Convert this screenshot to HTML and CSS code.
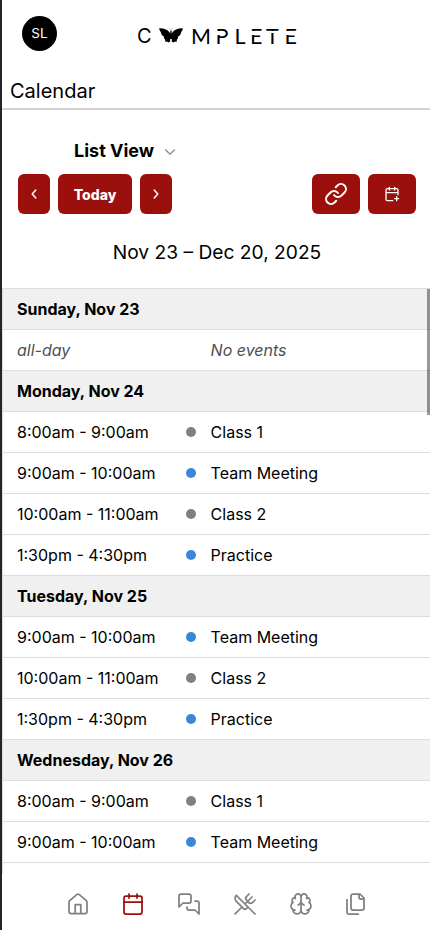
FILE: index.html
```html
<!DOCTYPE html>
<html lang="en">
<head>
<meta charset="utf-8">
<title>Calendar</title>
<link rel="stylesheet" href="styles.css">
</head>
<body>
<div class="app">
<header class="top">
  <div class="avatar">SL</div>
  <div class="logo">
    <span class="c">C</span>
    <svg class="butterfly" viewBox="0 0 24 17" width="24" height="17"><path d="M0 1.500Q4 .8 8 3Q10.500 4.500 11.300 6.500L11.300 4L12 3.500L12.700 4L12.700 6.500Q13.500 4.500 16 3Q20 .8 24 1.500Q23.300 3.500 22.300 5Q22 8 19 9.800Q19.500 11.500 18 12.500L17.500 15L16 14.500L14.500 15.500L12.800 14.500V12H11.200V14.500L9.500 15.500L8 14.500L6.500 15L6 12.500Q4.500 11.500 5 9.800Q2 8 1.700 5Q.7 3.500 0 1.500Z"/><path d="M11.500 3.500 10.500 1M12.500 3.500 13.500 1" stroke="#999" stroke-width=".5"/></svg>
    <span class="m">M</span><span class="p">P</span><span class="l">L</span><span class="e">E</span><span class="t">T</span><span class="e last">E</span>
  </div>
</header>
<h1 class="title">Calendar</h1>
<div class="view">List View<svg width="12" height="12" viewBox="0 0 12 12"><path d="M1.500 3.800 6 8.200 10.500 3.800"/></svg></div>
<div class="toolbar">
  <button class="btn arrow" aria-label="Previous"><svg width="16" height="16" viewBox="0 0 16 16"><path d="M9.800 4 6.200 8l3.600 4"/></svg></button>
  <button class="btn today">Today</button>
  <button class="btn arrow" aria-label="Next"><svg width="16" height="16" viewBox="0 0 16 16"><path d="M6.200 4 9.800 8l-3.600 4"/></svg></button>
  <button class="btn wide link" aria-label="Link"><svg width="24" height="24" viewBox="0 0 24 24"><path d="M10 13a5 5 0 0 0 7.540.54l3-3a5 5 0 0 0-7.070-7.070l-1.720 1.710"/><path d="M14 11a5 5 0 0 0-7.540-.54l-3 3a5 5 0 0 0 7.070 7.070l1.710-1.710"/></svg></button>
  <button class="btn wide" aria-label="Add event"><svg width="16" height="16" viewBox="0 0 24 24"><path d="M8 2v4M16 2v4M21 13V6a2 2 0 0 0-2-2H5a2 2 0 0 0-2 2v14a2 2 0 0 0 2 2h8M3 10h18M16 19h6M19 16v6"/></svg></button>
</div>
<h2 class="range">Nov 23 – Dec 20, 2025</h2>
<main class="list">
  <div class="day">Sunday, Nov 23</div>
  <div class="row none"><span>all-day</span><i></i><span>No events</span></div>
  <div class="day">Monday, Nov 24</div>
  <div class="row"><span>8:00am - 9:00am</span><i class="dot"></i><span>Class 1</span></div>
  <div class="row"><span>9:00am - 10:00am</span><i class="dot blue"></i><span>Team Meeting</span></div>
  <div class="row"><span>10:00am - 11:00am</span><i class="dot"></i><span>Class 2</span></div>
  <div class="row"><span>1:30pm - 4:30pm</span><i class="dot blue"></i><span>Practice</span></div>
  <div class="day">Tuesday, Nov 25</div>
  <div class="row"><span>9:00am - 10:00am</span><i class="dot blue"></i><span>Team Meeting</span></div>
  <div class="row"><span>10:00am - 11:00am</span><i class="dot"></i><span>Class 2</span></div>
  <div class="row"><span>1:30pm - 4:30pm</span><i class="dot blue"></i><span>Practice</span></div>
  <div class="day">Wednesday, Nov 26</div>
  <div class="row"><span>8:00am - 9:00am</span><i class="dot"></i><span>Class 1</span></div>
  <div class="row"><span>9:00am - 10:00am</span><i class="dot blue"></i><span>Team Meeting</span></div>
  <div class="thumb"></div>
</main>
<nav class="nav">
  <svg viewBox="0 0 24 24"><path d="M3 10.200a2 2 0 0 1 .7-1.500l7-6a2 2 0 0 1 2.600 0l7 6a2 2 0 0 1 .7 1.500V19.500a2 2 0 0 1-2 2H5a2 2 0 0 1-2-2zM9.200 21.500V12.500h5.600v9"/></svg>
  <svg class="active" viewBox="0 0 24 24"><path d="M8 2v4M16 2v4M3 10h18"/><rect x="3" y="4" width="18" height="18" rx="2"/></svg>
  <svg viewBox="0 0 24 24"><path d="M14 9a2 2 0 0 1-2 2H6l-4 4V4c0-1.100.9-2 2-2h8a2 2 0 0 1 2 2zM18 9h2a2 2 0 0 1 2 2v11l-4-4h-6a2 2 0 0 1-2-2v-1"/></svg>
  <svg viewBox="0 0 24 24"><path d="m16 2-2.300 2.300a3 3 0 0 0 0 4.200l1.800 1.800a3 3 0 0 0 4.200 0L22 8M15 15 3.300 3.300a4.200 4.200 0 0 0 0 6l7.300 7.300c.7.7 2 .7 2.800 0L15 15Zm0 0 7 7M2.100 21.800l6.400-6.300M19 5l-7 7"/></svg>
  <svg viewBox="0 0 24 24"><path d="M12 5a3 3 0 1 0-5.997.125 4 4 0 0 0-2.526 5.770 4 4 0 0 0 .556 6.588A4 4 0 1 0 12 18ZM12 5a3 3 0 1 1 5.997.125 4 4 0 0 1 2.526 5.770 4 4 0 0 1-.556 6.588A4 4 0 1 1 12 18ZM15 13a4.500 4.500 0 0 1-3-4 4.500 4.500 0 0 1-3 4M17.599 6.500a3 3 0 0 0 .399-1.375M6.003 5.125A3 3 0 0 0 6.401 6.500M3.477 10.896a4 4 0 0 1 .585-.396M19.938 10.500a4 4 0 0 1 .585.396M6 18a4 4 0 0 1-1.967-.516M19.967 17.484A4 4 0 0 1 18 18"/></svg>
  <svg viewBox="0 0 24 24"><path d="M20 7h-3a2 2 0 0 1-2-2V2M9 18a2 2 0 0 1-2-2V4a2 2 0 0 1 2-2h7l4 4v10a2 2 0 0 1-2 2ZM3 7.600v12.800A1.600 1.600 0 0 0 4.600 22h9.800"/></svg>
</nav>
</div>
</body>
</html>
```

FILE: styles.css
```css
* { box-sizing: border-box; }
body { margin: 0; background: #fff; font-family: Inter, "Liberation Sans", sans-serif; color: #000; }
.app { height: 930px; border-left: 2px solid #242426; display: flex; flex-direction: column; overflow: hidden; }
svg { fill: none; stroke: currentColor; stroke-width: 2; stroke-linecap: round; stroke-linejoin: round; flex: none; }
.top { height: 72px; display: flex; align-items: flex-start; padding: 15.500px 0 0 20px; }
.avatar { width: 35px; height: 35px; border-radius: 50%; background: #000; color: #fff; font-size: 13.500px; display: flex; align-items: center; justify-content: center; }
.logo { display: flex; height: 22px; margin: 9.500px 0 0 80px; font-family: Lato, sans-serif; font-size: 21.500px; line-height: 22px; }
.logo span { position: relative; flex: none; }
.logo .c { width: 22px; font-family: Inter, sans-serif; font-size: 20px; font-weight: 400; }
.logo .butterfly { fill: #000; stroke: none; margin: 2px 8px 0 0; }
.logo .m { width: 24.500px; }
.logo .p { width: 19px; }
.logo .l { width: 15.500px; }
.logo .e { width: 16px; }
.logo .t { width: 18.500px; }
.logo .e::after, .logo .p::after, .logo .t::after { content: ""; position: absolute; left: 0; top: 5.500px; width: 5px; height: 4px; background: #fff; }
.logo .t::after { left: 3px; width: 8px; height: 2.500px; }
.title { margin: 0; height: 38px; padding: 7px 0 0 8px; font-size: 20px; line-height: 24px; font-weight: 400; border-bottom: 2px solid #d1d1d6; }
.view { display: flex; align-items: center; gap: 10px; height: 26px; margin: 27px 0 0 72px; font-size: 18px; font-weight: 700; }
.view svg { color: #888; stroke-width: 1.200; margin-top: 3px; }
.toolbar { display: flex; gap: 8px; padding: 0 14px 0 16px; margin-top: 11px; }
.btn { height: 40px; border: 0; border-radius: 6px; background: #9b100d; color: #fff; padding: 0; display: flex; align-items: center; justify-content: center; font: 800 14px Inter, sans-serif; }
.arrow { width: 32px; }
.arrow svg { stroke-width: 1.500; }
.today { width: 74px; }
.wide { width: 48px; }
.link { margin-left: auto; }
.link svg { stroke-width: 2; }
.range { margin: 24px 0 0; height: 28px; line-height: 28px; padding-left: 2px; text-align: center; font-size: 19.200px; font-weight: 400; }
.list { position: relative; height: 586px; margin-top: 22px; border-top: 1px solid #ddd; border-left: 1px solid #ddd; font-size: 16px; }
.day, .row { height: 41px; padding-left: 14px; border-bottom: 1px solid #ddd; line-height: 40px; }
.day { background: #f0f0f0; font-weight: 700; }
.row { display: grid; grid-template-columns: 169.400px 24.200px 1fr; align-items: center; }
.none { font-style: italic; color: #505050; }
.dot { width: 10px; height: 10px; border-radius: 50%; background: #808080; }
.blue { background: #3788d8; }
.thumb { position: absolute; right: 0; top: 0; width: 3px; height: 126px; background: rgba(0,0,0,.4); }
.nav { display: flex; justify-content: space-between; padding: 17.500px 61.500px 0 63.500px; color: #808080; }
.nav svg { width: 24px; height: 24px; stroke-width: 1.750; }
.nav .active { color: #9b100d; }
```
